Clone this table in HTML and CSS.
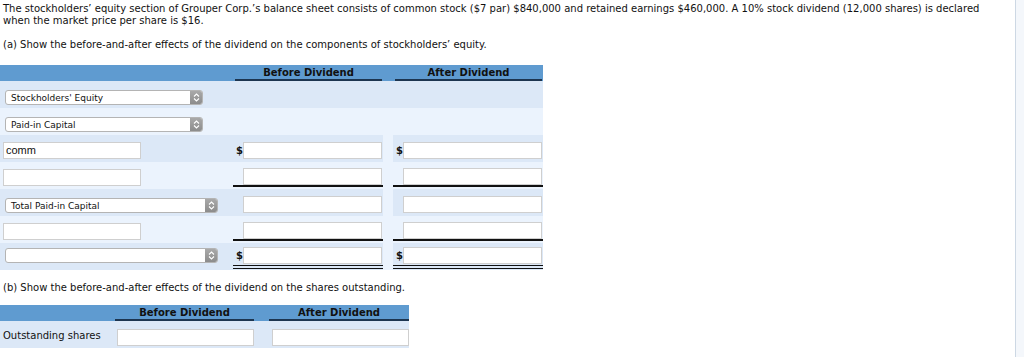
FILE: index.html
```html
<!DOCTYPE html>
<html lang="en">
<head>
  <meta charset="UTF-8">
  <title>Stock Dividend</title>
  <link rel="stylesheet" href="styles.css">
</head>
<body>
  <div class="page">
    <main class="question">
      <p class="prompt">The stockholders’ equity section of Grouper Corp.’s balance sheet consists of common stock ($7 par) $840,000 and retained earnings $460,000. A 10% stock dividend (12,000 shares) is declared when the market price per share is $16.</p>

      <p class="part part-a">(a) Show the before-and-after effects of the dividend on the components of stockholders’ equity.</p>

      <div class="sheet equity">
        <div class="sheet-head">
          <span></span>
          <span class="col-title">Before Dividend</span>
          <span></span>
          <span class="col-title">After Dividend</span>
        </div>

        <div class="row dark">
          <div class="label pick"><div class="select"><span>Stockholders' Equity</span><span class="stepper"><svg width="7" height="9" viewBox="0 0 7 9"><path d="M1 3.5L3.5 1L6 3.5M1 5.5L3.5 8L6 5.5" fill="none" stroke="#fff" stroke-width="1.1"/></svg></span></div></div>
        </div>

        <div class="row light">
          <div class="label pick"><div class="select"><span>Paid-in Capital</span><span class="stepper"><svg width="7" height="9" viewBox="0 0 7 9"><path d="M1 3.5L3.5 1L6 3.5M1 5.5L3.5 8L6 5.5" fill="none" stroke="#fff" stroke-width="1.1"/></svg></span></div></div>
        </div>

        <div class="row dark">
          <div class="label"><input class="field name" value="comm"></div>
          <div class="value"><span class="cur">$</span><input class="field amount"></div>
          <div class="gap"></div>
          <div class="value"><span class="cur">$</span><input class="field amount"></div>
        </div>

        <div class="row light">
          <div class="label"><input class="field name"></div>
          <div class="value ruled"><input class="field amount"></div>
          <div class="gap"></div>
          <div class="value ruled"><input class="field amount"></div>
        </div>

        <div class="row dark">
          <div class="label pick"><div class="select wide"><span>Total Paid-in Capital</span><span class="stepper"><svg width="7" height="9" viewBox="0 0 7 9"><path d="M1 3.5L3.5 1L6 3.5M1 5.5L3.5 8L6 5.5" fill="none" stroke="#fff" stroke-width="1.1"/></svg></span></div></div>
          <div class="value"><input class="field amount"></div>
          <div class="gap"></div>
          <div class="value"><input class="field amount"></div>
        </div>

        <div class="row light">
          <div class="label"><input class="field name"></div>
          <div class="value ruled"><input class="field amount"></div>
          <div class="gap"></div>
          <div class="value ruled"><input class="field amount"></div>
        </div>

        <div class="row dark">
          <div class="label last"><div class="select wide"><span></span><span class="stepper"><svg width="7" height="9" viewBox="0 0 7 9"><path d="M1 3.5L3.5 1L6 3.5M1 5.5L3.5 8L6 5.5" fill="none" stroke="#fff" stroke-width="1.1"/></svg></span></div></div>
          <div class="value doubled"><span class="cur">$</span><input class="field amount"></div>
          <div class="gap"></div>
          <div class="value doubled"><span class="cur">$</span><input class="field amount"></div>
        </div>
      </div>

      <p class="part part-b">(b) Show the before-and-after effects of the dividend on the shares outstanding.</p>

      <div class="sheet shares">
        <div class="sheet-head">
          <span></span>
          <span class="col-title">Before Dividend</span>
          <span></span>
          <span class="col-title">After Dividend</span>
        </div>
        <div class="row dark">
          <div class="label text">Outstanding shares</div>
          <div class="value"><input class="field amount"></div>
          <div></div>
          <div class="value"><input class="field amount"></div>
        </div>
      </div>
    </main>
    <aside class="rail"></aside>
  </div>
</body>
</html>
```

FILE: styles.css
```css
body {
  margin: 0;
  padding: 0;
  font-family: 'DejaVu Sans', Verdana, sans-serif;
  font-size: 10px;
  color: #111;
  background: white;
}

.page {
  display: flex;
  height: 357px;
}

.question {
  flex: 1;
  padding: 3px 0 0 3px;
}

.rail {
  width: 8px;
  border-left: 1px solid #cdd8e4;
  background: #f4f7fb;
}

.prompt {
  margin: 0;
  width: 982px;
  line-height: 12px;
}

.part {
  margin: 0;
  line-height: 12px;
}

.part-a {
  margin-top: 12px;
  margin-bottom: 14px;
}

.part-b {
  margin-top: 12px;
  margin-bottom: 11px;
}

/* answer grids */
.sheet {
  margin-left: -3px;
}

.equity {
  width: 543px;
}

.equity .sheet-head,
.equity .row {
  display: grid;
  grid-template-columns: 233px 150px 10px 150px;
}

.shares {
  width: 409px;
}

.shares .sheet-head,
.shares .row {
  display: grid;
  grid-template-columns: 115px 139px 15px 140px;
}

.sheet-head {
  background: #5f9bd0;
  height: 16px;
  align-items: end;
}

.col-title {
  font-weight: bold;
  text-align: center;
  color: #111;
  border-bottom: 2px solid #1d3550;
  line-height: 13px;
  margin: 0 1px 0 2px;
}

.shares .col-title {
  margin: 0;
}

.row {
  height: 27px;
  align-items: center;
}

.row.dark {
  background: #dce8f7;
}

.row.light {
  background: #ebf3fd;
}

.row .gap {
  align-self: stretch;
  background: #ebf3fd;
}

.label {
  display: flex;
  align-items: center;
  padding-left: 3px;
  padding-top: 3px;
}

.label.pick {
  padding-top: 6px;
}

.label.last {
  padding-top: 0;
  padding-bottom: 2px;
}

.label.text {
  padding-top: 2px;
}

.value {
  display: flex;
  align-items: center;
  justify-content: flex-end;
  align-self: stretch;
  padding-top: 3px;
  box-sizing: border-box;
}

.shares .value {
  padding-top: 5px;
}

.value.ruled {
  border-bottom: 2px solid #111;
  padding-top: 5px;
  height: 25px;
}

.value.doubled {
  border-bottom: 4px double #111;
  padding-top: 2px;
  height: 26px;
}

.cur {
  margin-right: auto;
  padding-left: 4px;
  font-weight: bold;
  font-size: 10px;
}

.field {
  box-sizing: border-box;
  height: 17px;
  border: 1px solid #cfcfcf;
  background: white;
  padding: 0 2px;
  font-family: 'Liberation Sans', Arial, sans-serif;
  font-size: 11px;
  color: #111;
  outline: none;
}

.field.name {
  width: 138px;
}

.field.amount {
  width: 139px;
  margin-right: 1px;
}

.shares .field.amount {
  width: 137px;
  margin-right: 0;
}

/* mac style popup menu */
.select {
  display: flex;
  align-items: center;
  justify-content: space-between;
  box-sizing: border-box;
  width: 198px;
  height: 15px;
  margin-left: 2px;
  border: 1px solid #b4b4b4;
  border-radius: 3px;
  background: white;
  font-family: 'DejaVu Sans', 'Lucida Grande', sans-serif;
  font-size: 9px;
  padding-left: 5px;
  overflow: hidden;
}

.select.wide {
  width: 213px;
}

.stepper {
  display: flex;
  align-items: center;
  justify-content: center;
  width: 12px;
  height: 13px;
  background: linear-gradient(#a9a9a9, #8c8c8c);
}
```
